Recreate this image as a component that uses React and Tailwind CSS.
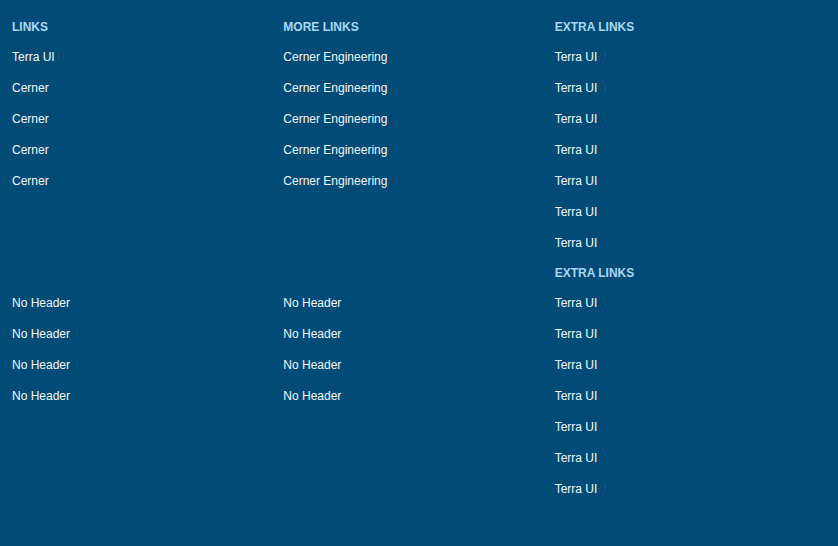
const sections = [
  [
    { title: "Links", links: ["Terra UI", "Cerner", "Cerner", "Cerner", "Cerner"] },
    { title: "More Links", links: Array(5).fill("Cerner Engineering") },
    { title: "Extra Links", links: Array(7).fill("Terra UI") },
  ],
  [
    { title: "", links: Array(4).fill("No Header") },
    { title: "", links: Array(4).fill("No Header") },
    { title: "Extra Links", links: Array(7).fill("Terra UI") },
  ],
];

function LinkGroup({ title, links }) {
  return (
    <div>
      <div className="flex h-[28px] items-center text-[12px] font-bold uppercase text-[#a9d8f3]">
        {title}
      </div>
      <ul>
        {links.map((link, i) => (
          <li key={i} className="flex h-[31px] items-center">
            <a href="#" className="text-[12px] text-[#f4f6f8]">
              {link}
            </a>
          </li>
        ))}
      </ul>
    </div>
  );
}

export default function App() {
  return (
    <div
      className="flex min-h-[546px] w-full flex-col gap-px bg-[#004c76] px-3 pt-[13px]"
      style={{ fontFamily: '"Liberation Sans", Arial, sans-serif' }}
    >
      {sections.map((row, r) => (
        <div key={r} className="grid grid-cols-3">
          {row.map((group, i) => (
            <LinkGroup key={i} {...group} />
          ))}
        </div>
      ))}
    </div>
  );
}
